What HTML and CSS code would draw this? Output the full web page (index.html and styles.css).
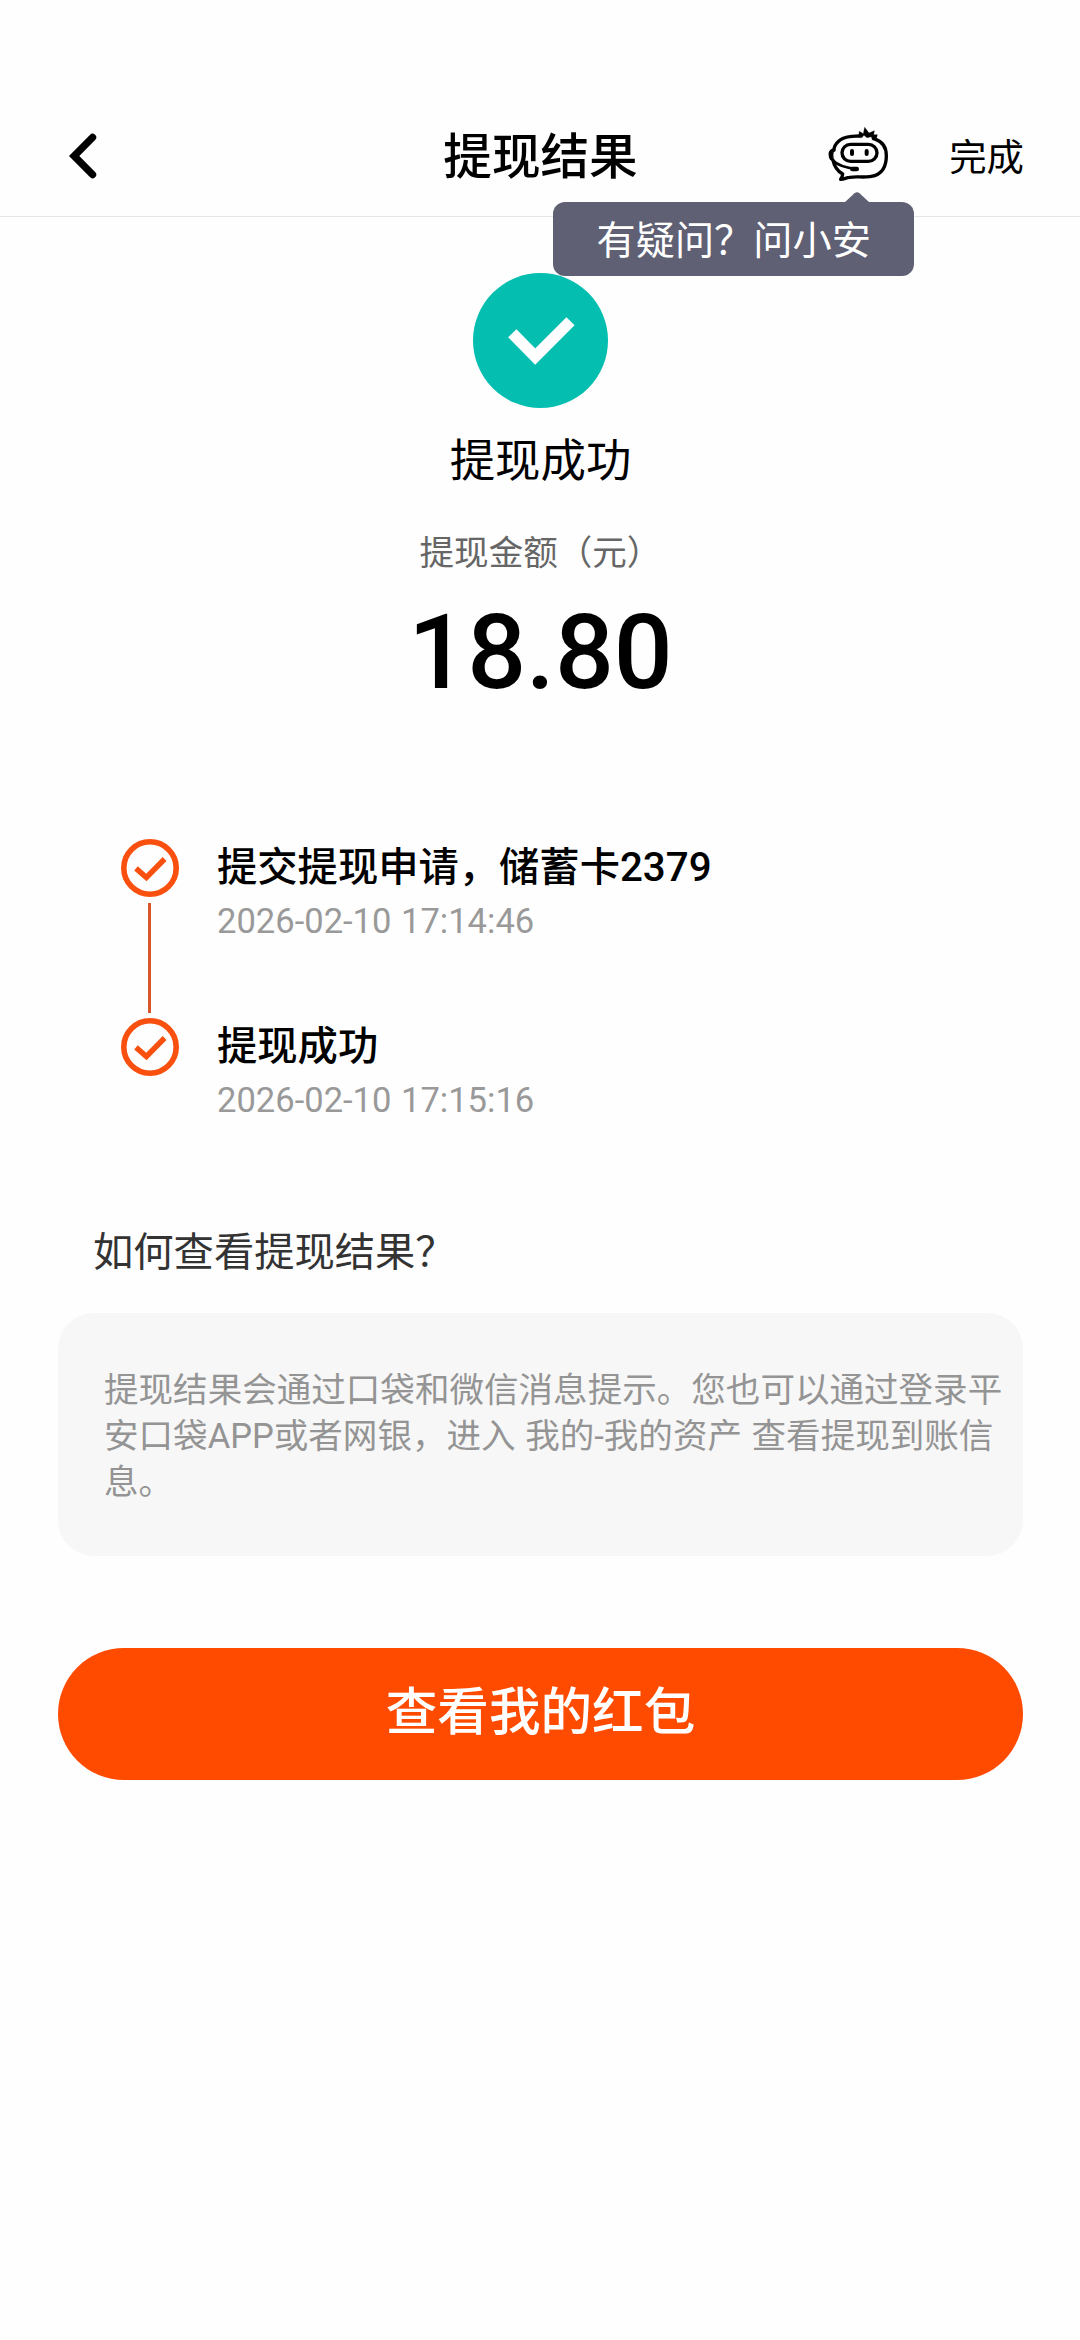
FILE: index.html
```html
<!DOCTYPE html>
<html lang="zh-CN">
<head>
<meta charset="utf-8">
<title>提现结果</title>
<link rel="stylesheet" href="styles.css">
</head>
<body>
<header class="header">
  <div class="header-left">
    <svg class="back" width="30" height="48" viewBox="0 0 30 48" fill="none" stroke="#000" stroke-width="7.4" stroke-linecap="round" stroke-linejoin="miter"><path d="M24.500 5.500L6.200 24L24.500 42.500"/></svg>
  </div>
  <h1 class="title">提现结果</h1>
  <div class="header-right">
    <div class="service">
      <svg class="robot" width="64" height="58" viewBox="48 42 192 174" fill="none" stroke="#000" stroke-width="10" stroke-linejoin="round" stroke-linecap="round">
        <path d="M72 121C72 101 91 84 119 80C130 78 139 79 149 78"/>
        <path d="M197 88C217 95 229 112 229 137C229 165 218 188 194 197C172 205 139 198 119 202C109 203 103 207 92 208C97 201 98 198 98 192C84 184 73 170 69 151"/>
        <path d="M146 80L148 64L160 71L164 52L177 69L193 62L191 74L202 74L198 92L187 90L184 80L171 83L162 76L155 83Z" fill="#000" stroke-width="1"/>
        <path d="M71 117C60 120 56 127 58 137C59 146 62 151 70 152C67 141 67 130 71 117Z" fill="#000" stroke-width="4"/>
        <rect x="96" y="103" width="105" height="51" rx="25.500"/>
        <path d="M126 123V132M170 123V132" stroke-width="12"/>
        <path d="M69 151C81 164 103 173 140 177" stroke-width="8"/>
        <path d="M127 177H140" stroke-width="14"/>
      </svg>
      <div class="tip"><svg class="tip-arrow" width="26" height="11" viewBox="0 0 26 11"><path d="M0 11L10.500 1.300Q13 -1 15.500 1.300L26 11Z" fill="#5f6073"/></svg>有疑问？问小安</div>
    </div>
    <span class="done">完成</span>
  </div>
</header>
<main>
  <section class="result">
    <svg class="success" width="135" height="135" viewBox="0 0 135 135" fill="none"><circle cx="67.500" cy="67.500" r="67.500" fill="#04beb0"/><path d="M39.300 60.300L62.200 83.600L97.500 48.300" stroke="#fff" stroke-width="11.500"/></svg>
    <h2 class="status">提现成功</h2>
    <p class="label">提现金额（元）</p>
    <p class="amount">18.80</p>
  </section>
  <ol class="steps">
    <li class="step">
      <div class="marker">
        <svg width="58" height="58" viewBox="0 0 58 58" fill="none" stroke="#f95010"><circle cx="29" cy="29" r="26.200" stroke-width="5.600"/><path d="M15 29.400L25.400 38.500L43.600 20" stroke-width="5.400"/></svg>
        <span class="line"></span>
      </div>
      <div class="info"><h3>提交提现申请，储蓄卡2379</h3><time>2026-02-10 17:14:46</time></div>
    </li>
    <li class="step">
      <div class="marker">
        <svg width="58" height="58" viewBox="0 0 58 58" fill="none" stroke="#f95010"><circle cx="29" cy="29" r="26.200" stroke-width="5.600"/><path d="M15 29.400L25.400 38.500L43.600 20" stroke-width="5.400"/></svg>
      </div>
      <div class="info"><h3>提现成功</h3><time>2026-02-10 17:15:16</time></div>
    </li>
  </ol>
  <h2 class="question">如何查看提现结果？</h2>
  <p class="answer">提现结果会通过口袋和微信消息提示。您也可以通过登录平安口袋APP或者网银，进入 我的-我的资产 查看提现到账信息。</p>
  <button class="primary" type="button">查看我的红包</button>
</main>
</body>
</html>
```
FILE: styles.css
```css
* { box-sizing: border-box; margin: 0; padding: 0; }

body {
  min-height: 2340px;
  background: #fefefe;
  color: #000;
  font-family: Roboto, "Noto Sans CJK SC", sans-serif;
}

.header {
  display: grid;
  grid-template-columns: 1fr auto 1fr;
  align-items: center;
  height: 217px;
  padding: 96px 56px 0 68px;
  border-bottom: 1px solid #e6e6e6;
}

.header-left, .header-right { display: flex; align-items: center; }
.header-right { justify-content: flex-end; gap: 59px; }
.back, .robot { display: block; }

.title {
  padding: 4px 11px 0 0;
  font-size: 48.6px;
  font-weight: 500;
  line-height: 64px;
}

.service { position: relative; margin-top: -6px; }

.tip {
  position: absolute;
  z-index: 1;
  top: 78px;
  right: -24px;
  width: 361px;
  height: 74px;
  border-radius: 12px;
  background: #5f6073;
  color: #fff;
  font-size: 39.2px;
  line-height: 78px;
  text-align: center;
  white-space: nowrap;
}

.tip-arrow { position: absolute; top: -10.5px; left: 291px; }

.done {
  padding-top: 3px;
  font-size: 37.4px;
  line-height: 50px;
}

.result {
  display: flex;
  flex-direction: column;
  align-items: center;
  padding: 56px 0 0 1px;
}

.status { margin-top: 22px; font-size: 45.4px; font-weight: 400; line-height: 64px; }
.label { margin-top: 34px; color: #666; font-size: 34.56px; line-height: 50px; }
.amount { margin-top: 15px; font-size: 103.7px; font-weight: 500; line-height: 120px; }

.steps { margin: 126px 58px 0 121px; list-style: none; }
.step { display: flex; gap: 38px; height: 104px; }
.step:first-child { height: 179px; }

.marker { display: flex; flex-direction: column; align-items: center; gap: 6px; width: 58px; }
.line { width: 3px; height: 110px; margin-right: 1px; background: #d9572b; }

.info { padding-top: 1px; }
.info h3 { font-size: 40.3px; font-weight: 500; line-height: 56px; }
.info time { display: block; margin-top: 4px; color: #999; font-size: 34.56px; line-height: 43px; word-spacing: 1px; }

.question {
  margin: 101px 0 0 93px;
  color: #333;
  font-size: 40.3px;
  font-weight: 400;
  line-height: 60px;
}

.answer {
  height: 243px;
  margin: 30px 57px 0 58px;
  padding: 54px 16px 0 46px;
  border-radius: 36px;
  background: #f7f7f7;
  color: #949494;
  font-size: 34.56px;
  line-height: 46px;
  word-spacing: 1px;
}

.primary {
  display: block;
  width: 965px;
  height: 132px;
  margin: 92px 0 0 58px;
  padding-bottom: 2px;
  border: 0;
  border-radius: 66px;
  background: #ff4b00;
  color: #fff;
  font: 500 51.6px/64px Roboto, "Noto Sans CJK SC", sans-serif;
}
```
